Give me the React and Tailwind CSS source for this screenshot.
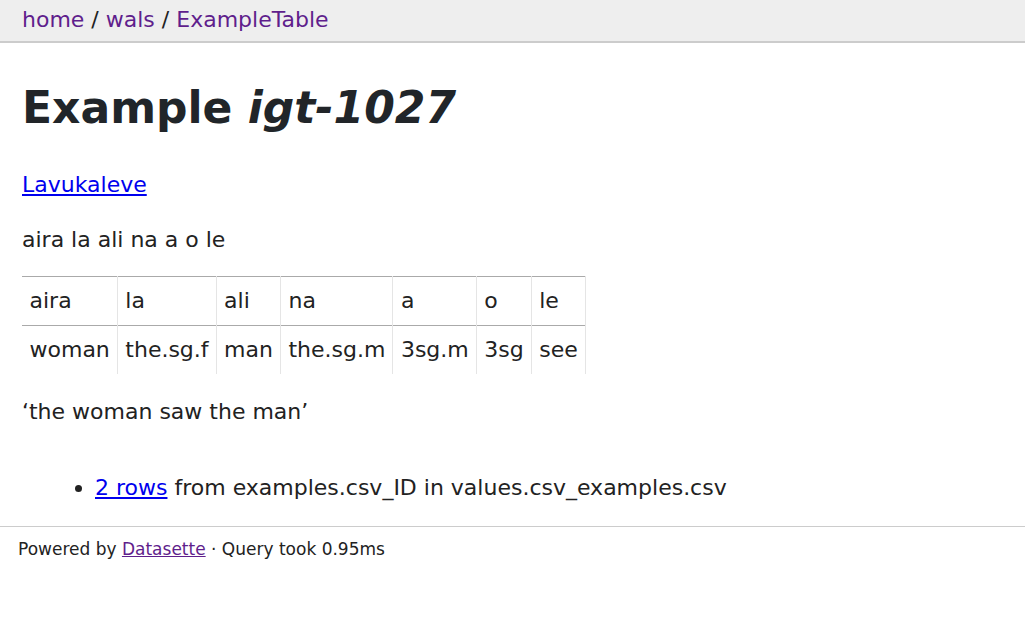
export default function App() {
  const row1 = ["aira", "la", "ali", "na", "a", "o", "le"];
  const row2 = ["woman", "the.sg.f", "man", "the.sg.m", "3sg.m", "3sg", "see"];
  return (
    <div className="min-h-[640px] bg-white text-[#222] text-[22px] leading-[1.4]" style={{ fontFamily: '"DejaVu Sans", sans-serif' }}>
      <div className="bg-[#eee] border-b-2 border-[#ccc] h-[43px] px-[22px] flex items-center">
        <p className="text-[#5f1e8c]">
          <a className="text-[#5f1e8c]">home</a>
          <span className="text-[#222]"> / </span>
          <a className="text-[#5f1e8c]">wals</a>
          <span className="text-[#222]"> / </span>
          <a className="text-[#5f1e8c]">ExampleTable</a>
        </p>
      </div>
      <div className="px-[22px]">
        <h1 className="text-[44px] font-bold text-[#212529] mt-[39px] leading-[1.2]">
          Example <i>igt-1027</i>
        </h1>
        <p className="mt-[35px]">
          <a className="text-[#0000ee] underline">Lavukaleve</a>
        </p>
        <p className="mt-[24px]">aira la ali na a o le</p>
        <table className="mt-[21px] border-collapse">
          <tbody>
            <tr className="border-t border-b border-[#aaa]">
              {row1.map((w, i) => (
                <td key={i} className="pl-[7.5px] pr-[7px] h-[49px] border-r border-[#e5e5e5]">{w}</td>
              ))}
            </tr>
            <tr>
              {row2.map((w, i) => (
                <td key={i} className="pl-[7.5px] pr-[7px] h-[48px] border-r border-[#e5e5e5]">{w}</td>
              ))}
            </tr>
          </tbody>
        </table>
        <p className="mt-[23px]">‘the woman saw the man’</p>
        <ul className="list-disc pl-[73px] mt-[45px]">
          <li>
            <a className="text-[#0000ee] underline">2 rows</a> from examples.csv_ID in values.csv_examples.csv
          </li>
        </ul>
      </div>
      <div className="mt-[23px] border-t border-[#ccc] px-[18px] pt-[11px] text-[17px]">
        Powered by <a className="text-[#5f1e8c] underline">Datasette</a> · Query took 0.95ms
      </div>
    </div>
  );
}
